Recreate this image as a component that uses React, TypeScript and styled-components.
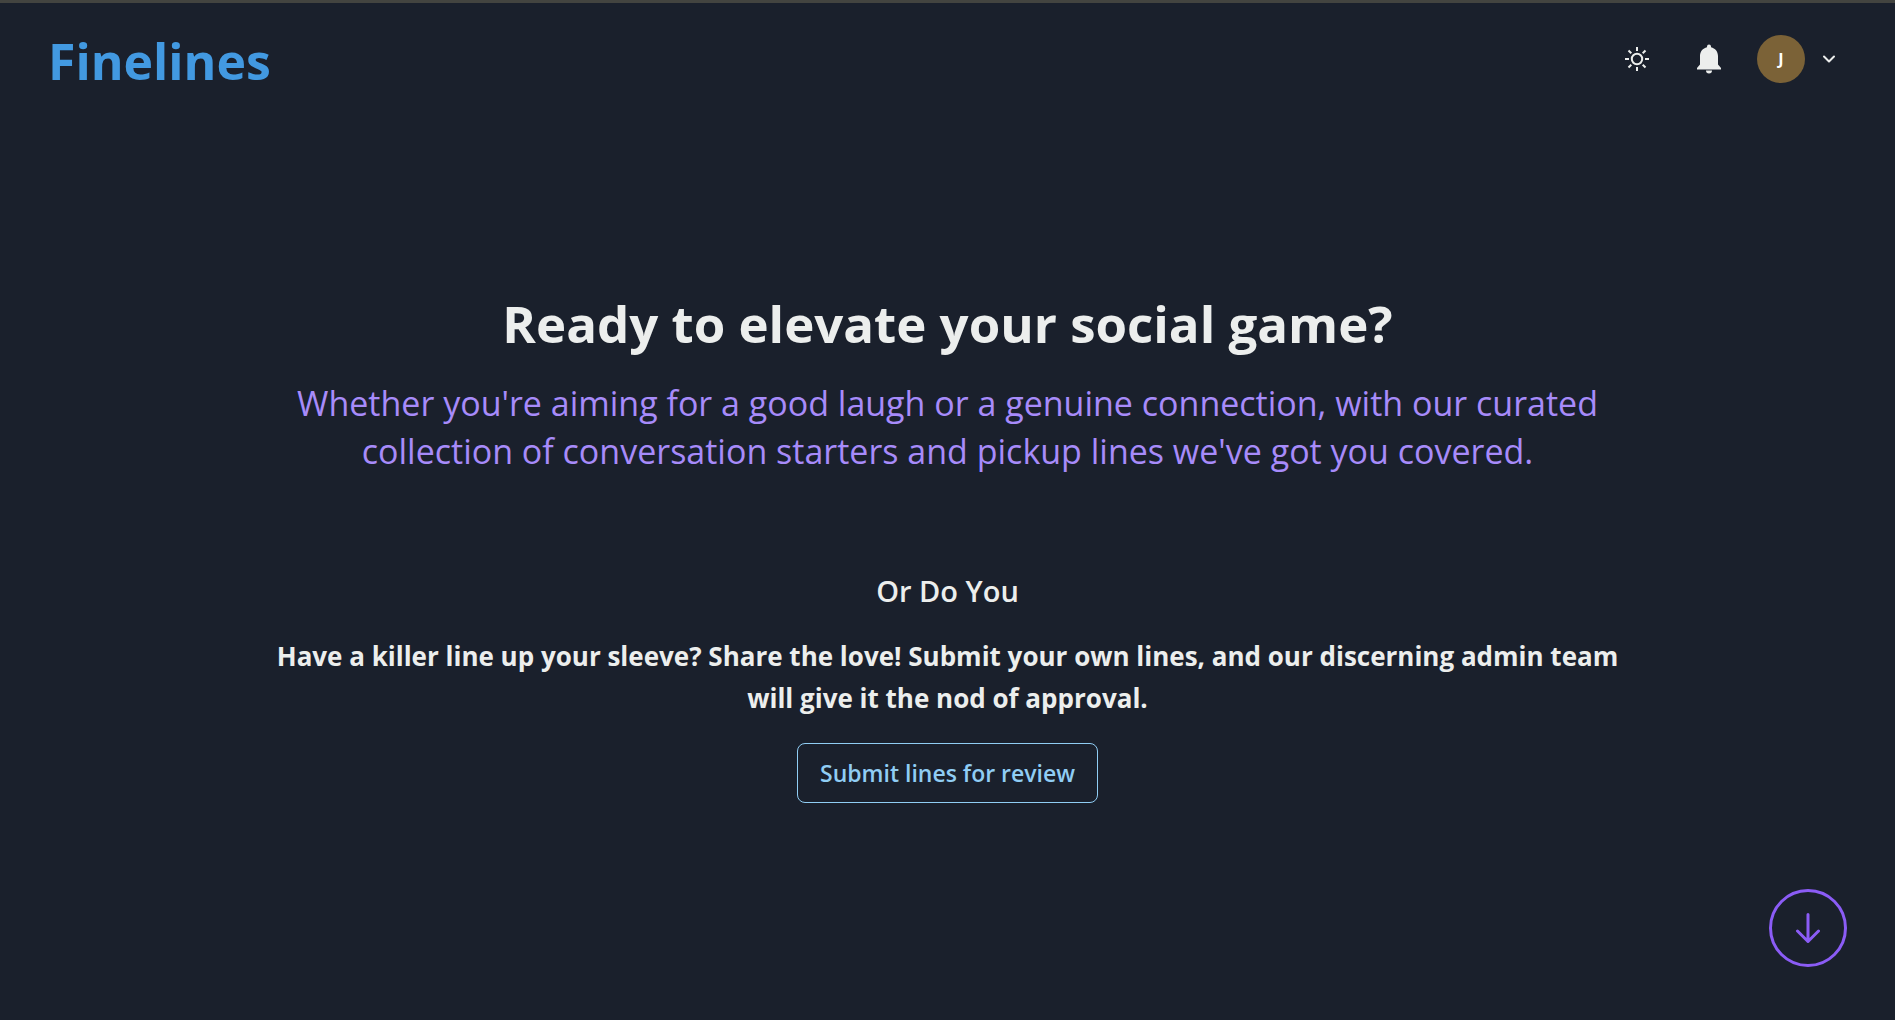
import React from "react";
import styled, { createGlobalStyle } from "styled-components";

const GlobalStyle = createGlobalStyle`
  *, *::before, *::after { box-sizing: border-box; }
  body {
    margin: 0;
    background: #1a202c;
    color: #eceeed;
    font-family: "Segoe UI", "Open Sans", "Noto Sans", sans-serif;
  }
  h1, h2, p { margin: 0; }
  button { font: inherit; cursor: pointer; }
`;

const Page = styled.div`
  display: flex;
  flex-direction: column;
  min-height: 100vh;
  border-top: 3px solid #434440;
`;

const Header = styled.header`
  display: flex;
  align-items: flex-start;
  justify-content: space-between;
  padding: 20px 48px;
`;

const Brand = styled.a`
  color: #4299e1;
  font-size: 50px;
  line-height: 76px;
  font-weight: 700;
  text-decoration: none;
`;

const Actions = styled.nav`
  display: flex;
  align-items: center;
  gap: 12px;
  height: 72px;
`;

const IconButton = styled.button`
  display: grid;
  place-items: center;
  width: 60px;
  height: 60px;
  padding: 0;
  border: 0;
  background: transparent;
  color: #eceeed;
`;

const UserMenu = styled.button`
  display: flex;
  align-items: center;
  gap: 12px;
  padding: 0 6px;
  border: 0;
  background: transparent;
  color: #eceeed;
`;

const Avatar = styled.span`
  display: grid;
  place-items: center;
  width: 48px;
  height: 48px;
  border-radius: 50%;
  background: #7b6237;
  color: #ffffff;
  font-size: 16px;
  font-weight: 700;
`;

const Main = styled.main`
  display: flex;
  flex: 1;
  flex-direction: column;
  align-items: center;
  width: 100%;
  max-width: 1400px;
  margin: 0 auto;
  padding: 168px 24px 0;
  text-align: center;
`;

const Title = styled.h1`
  font-size: 51px;
  line-height: 72px;
  font-weight: 700;
`;

const Lead = styled.p`
  margin-top: 20px;
  color: #a78bfa;
  font-size: 34px;
  line-height: 48px;
`;

const Subtitle = styled.h2`
  margin-top: 96px;
  font-size: 29px;
  line-height: 40px;
  font-weight: 600;
`;

const Pitch = styled.p`
  margin-top: 24px;
  font-size: 26px;
  line-height: 42px;
  font-weight: 700;
`;

const SubmitButton = styled.button`
  height: 60px;
  margin-top: 24px;
  padding: 0 22px;
  border: 1px solid #90cdf4;
  border-radius: 8px;
  background: transparent;
  color: #90cdf4;
  font-size: 23px;
  font-weight: 600;
`;

const ScrollButton = styled.button`
  position: fixed;
  right: 48px;
  bottom: 53px;
  display: grid;
  place-items: center;
  width: 78px;
  height: 78px;
  padding: 0;
  border: 3px solid #8b5cf6;
  border-radius: 50%;
  background: transparent;
  color: #8b5cf6;
`;

const SunIcon = () => (
  <svg width="24" height="24" viewBox="0 0 24 24" fill="none" stroke="currentColor" strokeWidth="2" aria-hidden="true">
    <circle cx="12" cy="12" r="5.2" />
    <path d="M12 0v4M12 20v4M0 12h4M20 12h4M3.5 3.5l2.8 2.8M17.7 17.7l2.8 2.8M20.5 3.5l-2.8 2.8M6.3 17.7l-2.8 2.8" />
  </svg>
);

const BellIcon = () => (
  <svg width="24" height="30" viewBox="0 0 24 30" fill="currentColor" aria-hidden="true">
    <path d="M12 0.5a2 2 0 0 0-2 2v.7C5.800 4.200 3 7.500 3 12v8.500L0 24v1.500h24V24l-3-3.500V12c0-4.500-2.800-7.800-7-8.800v-.7a2 2 0 0 0-2-2z" />
    <path d="M9 26.500h6a3 3 0 0 1-6 0z" />
  </svg>
);

const ChevronIcon = () => (
  <svg width="24" height="24" viewBox="0 0 24 24" fill="none" stroke="currentColor" strokeWidth="2" strokeLinecap="round" strokeLinejoin="round" aria-hidden="true">
    <path d="M7 9.500l5 5 5-5" />
  </svg>
);

const ArrowIcon = () => (
  <svg width="30" height="30" viewBox="0 0 30 30" fill="none" stroke="currentColor" strokeWidth="3" strokeLinecap="round" strokeLinejoin="round" aria-hidden="true">
    <path d="M15 1.500v27M4.500 18L15 28.500 25.500 18" />
  </svg>
);

export default function App() {
  return (
    <>
      <GlobalStyle />
      <Page>
        <Header>
          <Brand href="#">Finelines</Brand>
          <Actions aria-label="Account">
            <IconButton type="button" aria-label="Toggle colour mode">
              <SunIcon />
            </IconButton>
            <IconButton type="button" aria-label="Notifications">
              <BellIcon />
            </IconButton>
            <UserMenu type="button" aria-label="User menu">
              <Avatar>J</Avatar>
              <ChevronIcon />
            </UserMenu>
          </Actions>
        </Header>
        <Main>
          <Title>Ready to elevate your social game?</Title>
          <Lead>
            Whether you're aiming for a good laugh or a genuine connection, with our curated
            collection of conversation starters and pickup lines we've got you covered.
          </Lead>
          <Subtitle>Or Do You</Subtitle>
          <Pitch>
            Have a killer line up your sleeve? Share the love! Submit your own lines, and our
            discerning admin team will give it the nod of approval.
          </Pitch>
          <SubmitButton type="button">Submit lines for review</SubmitButton>
        </Main>
        <ScrollButton type="button" aria-label="Scroll down">
          <ArrowIcon />
        </ScrollButton>
      </Page>
    </>
  );
}
